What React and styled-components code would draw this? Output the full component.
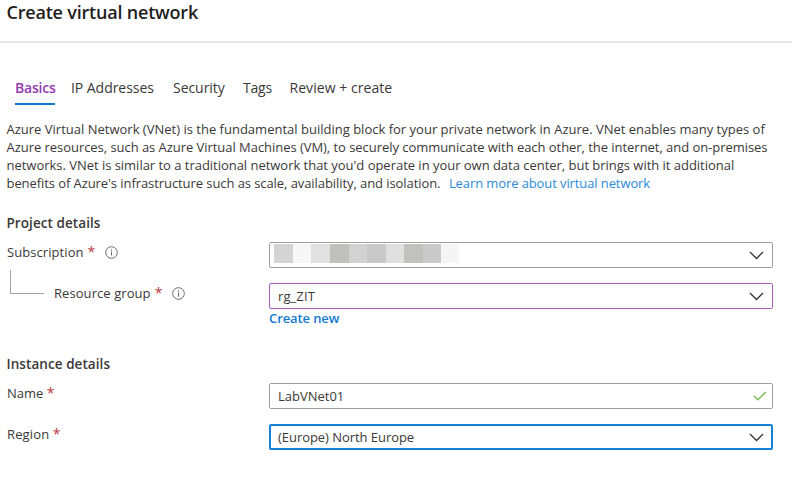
import React from "react";
import styled, { createGlobalStyle } from "styled-components";

const GlobalStyle = createGlobalStyle`
  * { box-sizing: border-box; }
  body { margin: 0; background: #fff; }
`;

const Page = styled.div`
  width: 792px;
  height: 491px;
  overflow: hidden;
  background: #fff;
  color: #3a3938;
  font-family: "Open Sans", "Noto Sans", sans-serif;
  font-size: 13px;
  display: flex;
  flex-direction: column;
`;

const Header = styled.header`
  flex: none;
  height: 43px;
  padding-left: 6.5px;
  border-bottom: 2px solid #e7e6e5;
`;

const Title = styled.h1`
  margin: 0;
  font-size: 18px;
  line-height: 24px;
  font-weight: 580;
  letter-spacing: -0.2px;
  color: #1f1e1d;
`;

const Tabs = styled.nav`
  flex: none;
  display: flex;
  margin: 33px 0 0 15px;
  height: 29px;
`;

const Tab = styled.a`
  flex: none;
  width: ${(p) => p.$width}px;
  margin-right: ${(p) => p.$gap}px;
  height: 29px;
  font-size: 14px;
  line-height: 24px;
  white-space: nowrap;
  letter-spacing: ${(p) => p.$spacing || 0}px;
  color: ${(p) => (p.$active ? "#9339b1" : "#3a3938")};
  font-weight: ${(p) => (p.$active ? 550 : 400)};
  border-bottom: ${(p) => (p.$active ? "2px solid #0f78d4" : "none")};
`;

const Description = styled.p`
  flex: none;
  margin: 15px 0 0 6.5px;
  font-size: 13px;
  line-height: 18px;
`;

const Line = styled.span`
  display: block;
  white-space: nowrap;
  letter-spacing: ${(p) => p.$spacing || 0}px;
`;

const Link = styled.a`
  color: #2b8ad9;
  letter-spacing: -0.1px;
  margin-left: ${(p) => p.$gap || 0}px;
`;

const SectionTitle = styled.h2`
  margin: ${(p) => p.$top}px 0 0 6.5px;
  flex: none;
  height: 20px;
  font-size: 13.5px;
  line-height: 20px;
  font-weight: 600;
  letter-spacing: 0.07px;
`;

const Row = styled.div`
  flex: none;
  display: grid;
  grid-template-columns: 262px 504px;
  margin: ${(p) => p.$top}px 0 0 7px;
  height: 26px;
`;

const Label = styled.label`
  display: flex;
  height: 20px;
  line-height: 20px;
  white-space: nowrap;
  letter-spacing: ${(p) => p.$spacing || 0}px;
`;

const Required = styled.span`
  color: #b83a42;
  font-size: 14px;
  font-weight: 500;
  margin-left: ${(p) => p.$gap || 4}px;
  width: 7px;
`;

const InfoIcon = styled.svg`
  flex: none;
  width: 13px;
  height: 13px;
  margin: 4px 0 0 10px;
`;

const Connector = styled.span`
  flex: none;
  width: 34px;
  height: 24px;
  margin: -13px 10px 0 3px;
  border-left: 1px solid #a5a4a3;
  border-bottom: 1px solid #a5a4a3;
`;

const Field = styled.div`
  display: flex;
  align-items: center;
  height: 26px;
  padding-left: ${(p) => (p.$border === 2 ? 7 : 8)}px;
  padding-right: ${(p) => p.$right - (p.$border || 1)}px;
  border: ${(p) => p.$border || 1}px solid ${(p) => p.$color || "#a09f9e"};
  border-radius: 2px;
`;

const Value = styled.span`
  flex: 1;
  line-height: 20px;
  white-space: nowrap;
  letter-spacing: ${(p) => p.$spacing || 0}px;
`;

const Redacted = styled.div`
  flex: 1;
  display: flex;
  height: 19px;
  margin: -3px 0 0 -4px;
`;

const Block = styled.span`
  width: ${(p) => p.$width}px;
  background: ${(p) => p.$color};
`;

const CreateNew = styled.a`
  flex: none;
  display: block;
  height: 20px;
  margin-left: 269px;
  line-height: 19px;
  color: #1079d2;
  font-weight: 560;
  letter-spacing: -0.1px;
`;

const blocks = [
  [19, "#d4d4d4"], [18, "#f7f7f7"], [19, "#e1e1e1"], [19, "#c0c0be"],
  [18, "#d2d2d2"], [19, "#c9c9c9"], [18, "#dfdfdf"], [19, "#c1c1bf"],
  [18, "#cacaca"], [18, "#f5f5f5"],
];

const Info = () => (
  <InfoIcon viewBox="0 0 13 13" fill="none">
    <circle cx="6.5" cy="6.5" r="5.8" stroke="#6b6a69" strokeWidth="1" />
    <path d="M6.5 5.5V9.5M6.5 3.3V4.5" stroke="#6b6a69" strokeWidth="1.1" />
  </InfoIcon>
);

const Chevron = () => (
  <svg width="15" height="9" viewBox="0 0 15 9" fill="none">
    <path d="M1 1L7.5 7.5L14 1" stroke="#323130" strokeWidth="1.3" />
  </svg>
);

const Check = () => (
  <svg width="14" height="10" viewBox="0 0 14 10" fill="none">
    <path d="M1 5L4.9 8.7L13 1" stroke="#7cb551" strokeWidth="1.4" />
  </svg>
);

export default function App() {
  return (
    <>
      <GlobalStyle />
      <Page>
        <Header>
          <Title>Create virtual network</Title>
        </Header>
        <Tabs>
          <Tab $active $width={40} $gap={16} $spacing={-0.2}>Basics</Tab>
          <Tab $width={84} $gap={18} $spacing={-0.05}>IP Addresses</Tab>
          <Tab $width={52} $gap={18} $spacing={-0.05}>Security</Tab>
          <Tab $width={28.5} $gap={18} $spacing={-0.2}>Tags</Tab>
          <Tab $width={103} $gap={0} $spacing={0.05}>Review + create</Tab>
        </Tabs>
        <Description>
          <Line $spacing={0.005}>Azure Virtual Network (VNet) is the fundamental building block for your private network in Azure. VNet enables many types of</Line>
          <Line $spacing={-0.045}>Azure resources, such as Azure Virtual Machines (VM), to securely communicate with each other, the internet, and on-premises</Line>
          <Line $spacing={-0.025}>networks. VNet is similar to a traditional network that you'd operate in your own data center, but brings with it additional</Line>
          <Line $spacing={-0.075}>
            benefits of Azure's infrastructure such as scale, availability, and isolation.
            <Link $gap={8.5}>Learn more about virtual network</Link>
          </Line>
        </Description>
        <SectionTitle $top={21}>Project details</SectionTitle>
        <Row $top={9}>
          <Label $spacing={0.07}>Subscription<Required>*</Required><Info /></Label>
          <Field $right={9}>
            <Redacted>
              {blocks.map(([width, color], i) => (
                <Block key={i} $width={width} $color={color} />
              ))}
            </Redacted>
            <Chevron />
          </Field>
        </Row>
        <Row $top={15}>
          <Label $spacing={0.07}>
            <Connector />Resource group<Required>*</Required><Info />
          </Label>
          <Field $right={9} $color="#a860c0">
            <Value $spacing={0.1}>rg_ZIT</Value>
            <Chevron />
          </Field>
        </Row>
        <CreateNew>Create new</CreateNew>
        <SectionTitle $top={25}>Instance details</SectionTitle>
        <Row $top={9}>
          <Label>Name<Required $gap={3.5}>*</Required></Label>
          <Field $right={6}>
            <Value>LabVNet01</Value>
            <Check />
          </Field>
        </Row>
        <Row $top={15}>
          <Label $spacing={0.15}>Region<Required $gap={3.5}>*</Required></Label>
          <Field $right={9} $border={2} $color="#1681d8">
            <Value $spacing={-0.05}>(Europe) North Europe</Value>
            <Chevron />
          </Field>
        </Row>
      </Page>
    </>
  );
}
